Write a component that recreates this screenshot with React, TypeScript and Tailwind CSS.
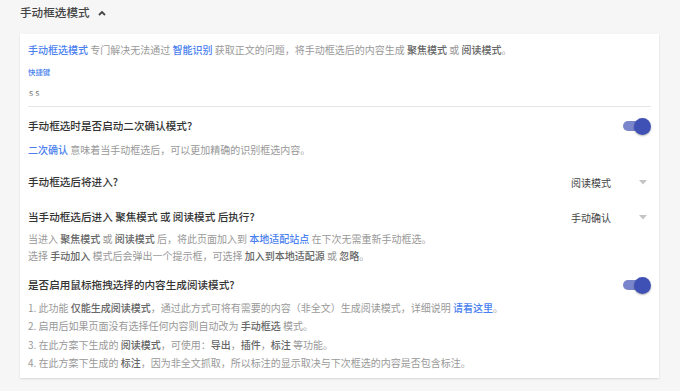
import React from "react";

const B = ({ children }: { children: React.ReactNode }) => (
  <span className="text-[#666] font-medium">{children}</span>
);

const A = ({ children }: { children: React.ReactNode }) => (
  <span className="text-[#4a7ff0] font-medium">{children}</span>
);

const Toggle = () => (
  <div className="relative w-[28px] h-[17px] flex items-center">
    <div className="w-[22px] h-[10px] rounded-full bg-[#7986cb]" />
    <div className="absolute right-0 top-0 w-[17px] h-[17px] rounded-full bg-[#3f51b5] shadow-[0_1px_2px_rgba(0,0,0,0.3)]" />
  </div>
);

const Select = ({ value }: { value: string }) => (
  <div className="w-[80px] flex items-center justify-between text-[10px] text-[#444]">
    <span>{value}</span>
    <svg width="8" height="5" viewBox="0 0 8 5" className="mr-[4px]">
      <path d="M0 0 L8 0 L4 4.5 Z" fill="#c4c4c4" />
    </svg>
  </div>
);

const Title = ({ children }: { children: React.ReactNode }) => (
  <div className="text-[10.6px] leading-[16px] text-[#333] font-medium">{children}</div>
);

export default function App() {
  return (
    <div
      className="w-[680px] h-[391px] bg-[#f6f6f6] overflow-hidden"
      style={{ fontFamily: '"Noto Sans CJK SC", "Noto Sans", sans-serif' }}
    >
      <div className="h-[26px] flex items-center pl-[20px] gap-[8px]">
        <span className="text-[11.6px] text-[#444] font-medium">手动框选模式</span>
        <svg width="8" height="6" viewBox="0 0 8 6">
          <path d="M1 5 L4 2 L7 5" fill="none" stroke="#444" strokeWidth="1.8" />
        </svg>
      </div>
      <div className="mt-[8px] ml-[20px] w-[639px] bg-white px-[8px] pt-[8px] pb-[5px] shadow-[0_1px_2px_rgba(0,0,0,0.12)]">
        <div className="text-[10px] leading-[16px] text-[#999]">
          <A>手动框选模式</A> 专门解决无法通过 <A>智能识别</A> 获取正文的问题，将手动框选后的内容生成 <B>聚焦模式</B> 或 <B>阅读模式</B>。
        </div>
        <div className="mt-[9px] text-[7.4px] leading-[10px] text-[#4a7ff0] font-medium">快捷键</div>
        <div className="mt-[10px] text-[9px] leading-[12px] text-[#777] pl-[1px]">s s</div>
        <div className="mt-[7px] border-t border-[#e6e6e6]" />

        <div className="mt-[11px] flex items-center justify-between h-[16px]">
          <Title>手动框选时是否启动二次确认模式?</Title>
          <Toggle />
        </div>
        <div className="mt-[8px] text-[10px] leading-[16px] text-[#999]">
          <A>二次确认</A> 意味着当手动框选后，可以更加精确的识别框选内容。
        </div>

        <div className="mt-[16px] flex items-center justify-between h-[16px]">
          <Title>手动框选后将进入?</Title>
          <Select value="阅读模式" />
        </div>

        <div className="mt-[19px] flex items-center justify-between h-[16px]">
          <Title>当手动框选后进入 聚焦模式 或 阅读模式 后执行?</Title>
          <Select value="手动确认" />
        </div>
        <div className="mt-[4.5px] text-[10px] leading-[17px] text-[#999]">
          <div>
            当进入 <B>聚焦模式</B> 或 <B>阅读模式</B> 后，将此页面加入到 <A>本地适配站点</A> 在下次无需重新手动框选。
          </div>
          <div>
            选择 <B>手动加入</B> 模式后会弹出一个提示框，可选择 <B>加入到本地适配源</B> 或 <B>忽略</B>。
          </div>
        </div>

        <div className="mt-[13.5px] flex items-center justify-between h-[16px]">
          <Title>是否启用鼠标拖拽选择的内容生成阅读模式?</Title>
          <Toggle />
        </div>
        <div className="mt-[5.75px] text-[10px] leading-[18.5px] text-[#999]">
          <div>
            1. 此功能 <B>仅能生成阅读模式</B>，通过此方式可将有需要的内容（非全文）生成阅读模式，详细说明 <A>请看这里</A>。
          </div>
          <div>
            2. 启用后如果页面没有选择任何内容则自动改为 <B>手动框选</B> 模式。
          </div>
          <div>
            3. 在此方案下生成的 <B>阅读模式</B>，可使用：<B>导出</B>，<B>插件</B>，<B>标注</B> 等功能。
          </div>
          <div>
            4. 在此方案下生成的 <B>标注</B>，因为非全文抓取，所以标注的显示取决与下次框选的内容是否包含标注。
          </div>
        </div>
      </div>
    </div>
  );
}
